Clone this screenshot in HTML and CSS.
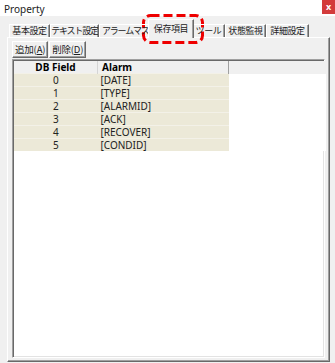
FILE: index.html
```html
<!DOCTYPE html>
<html>
<head>
	<meta charset="utf-8">
	<link rel="stylesheet" href="styles.css">
</head>
<body>
	<div class="window">
		<div class="titlebar">
			<span class="title">Property</span>
			<span class="close">x</span>
		</div>
		<div class="client">
			<div class="tabs">
				<div class="tab w1">基本設定</div>
				<div class="tab w2">テキスト設定</div>
				<div class="tab w3">アラームマスク</div>
				<div class="tab w4 active">保存項目</div>
				<div class="tab w5">ツール</div>
				<div class="tab w6">状態監視</div>
				<div class="tab w7">詳細設定</div>
			</div>
			<div class="panel">
				<div class="toolbar">
					<button class="btn">追加(<u>A</u>)</button>
					<button class="btn">削除(<u>D</u>)</button>
				</div>
				<div class="list">
					<table>
						<tr class="head">
							<th class="col1">DB Field</th>
							<th class="col2">Alarm</th>
							<th class="rest"></th>
						</tr>
						<tr class="row"><td class="num">0</td><td>[DATE]</td><td class="rest"></td></tr>
						<tr class="row"><td class="num">1</td><td>[TYPE]</td><td class="rest"></td></tr>
						<tr class="row"><td class="num">2</td><td>[ALARMID]</td><td class="rest"></td></tr>
						<tr class="row"><td class="num">3</td><td>[ACK]</td><td class="rest"></td></tr>
						<tr class="row"><td class="num">4</td><td>[RECOVER]</td><td class="rest"></td></tr>
						<tr class="row"><td class="num">5</td><td>[CONDID]</td><td class="rest"></td></tr>
					</table>
				</div>
			</div>
		</div>
		<svg class="mark" width="62" height="30" viewBox="0 0 62 30">
			<rect x="1.5" y="1.5" width="59" height="27" rx="7" ry="7" fill="none" stroke="#ee0000" stroke-width="3" stroke-dasharray="9 4"/>
		</svg>
	</div>
</body>
</html>
```

FILE: styles.css
```css
html, body {
	margin: 0;
	padding: 0;
}

body {
	font-family: "Noto Sans CJK JP", "Noto Sans", sans-serif;
	font-size: 10px;
	color: #000;
}

.window {
	position: relative;
	width: 335px;
	height: 363px;
	background: #f0f0f0;
	display: flex;
	flex-direction: column;
	overflow: hidden;
}

.titlebar {
	height: 16px;
	background: #fff;
	display: flex;
	align-items: flex-start;
	justify-content: space-between;
}

.title {
	font-family: "Noto Sans", sans-serif;
	font-size: 10px;
	padding: 2px 0 0 4px;
	color: #222;
}

.close {
	width: 13px;
	height: 14px;
	background: #d33b3b;
	color: #fff;
	font-family: "Noto Sans", sans-serif;
	font-size: 9px;
	font-weight: bold;
	text-align: center;
	line-height: 13px;
}

.client {
	flex: 1;
	display: flex;
	flex-direction: column;
	padding: 2px 5px 1px 7px;
	background: #f0f0f0;
}

.tabs {
	display: flex;
	align-items: flex-end;
	padding-left: 2px;
	height: 19px;
	position: relative;
	z-index: 1;
}

.tab {
	height: 13px;
	box-sizing: border-box;
	border-top: 1px solid #fff;
	border-left: 1px solid #fff;
	border-right: 1px solid #696969;
	box-shadow: inset -1px 0 0 #a0a0a0;
	text-align: center;
	font-size: 9px;
	letter-spacing: -0.4px;
	line-height: 12px;
	white-space: nowrap;
	overflow: hidden;
	color: #222;
}

.tab.active {
	height: 19px;
	margin: 0 -2px -1px -2px;
	padding-top: 3px;
	background: #f0f0f0;
	position: relative;
	z-index: 1;
}

.w1 { width: 41px; }
.w2 { width: 49px; letter-spacing: -1.2px; }
.w3 { width: 51px; text-align: left; padding-left: 2px; letter-spacing: -1.2px; overflow: visible; }
.w4 { width: 46px; }
.w5 { width: 33px; }
.w6 { width: 41px; }
.w7 { width: 43px; }

.panel {
	flex: 1;
	display: flex;
	flex-direction: column;
	border-top: 1px solid #fff;
	border-left: 1px solid #fff;
	border-right: 1px solid #696969;
	border-bottom: 1px solid #696969;
	box-shadow: inset -1px -1px 0 #a0a0a0;
	padding: 3px 4px 3px 4px;
}

.toolbar {
	display: flex;
	gap: 1px;
	height: 17px;
}

.btn {
	height: 17px;
	padding: 0 2px;
	margin: 0;
	font-family: "Noto Sans CJK JP", sans-serif;
	font-size: 9.5px;
	letter-spacing: -0.2px;
	line-height: 13px;
	background: #f0f0f0;
	border-top: 1px solid #fff;
	border-left: 1px solid #fff;
	border-right: 1px solid #696969;
	border-bottom: 1px solid #696969;
	box-shadow: inset -1px -1px 0 #a0a0a0;
	color: #222;
}

.list {
	flex: 1;
	margin-top: 1px;
	background: #fff;
	border-top: 1px solid #a0a0a0;
	border-left: 1px solid #a0a0a0;
	border-right: 1px solid #fff;
	border-bottom: 1px solid #fff;
	box-shadow: inset 1px 1px 0 #696969, inset -1px -1px 0 #e3e3e3;
	padding: 1px 0 0 1px;
}

table {
	border-collapse: collapse;
	width: 312px;
	font-family: "Noto Sans", sans-serif;
	font-size: 10px;
}

.head th {
	height: 12px;
	padding: 0;
	background: #f0f0f0;
	font-weight: bold;
	line-height: 11px;
	border-right: 1px solid #d5d5d5;
}

.head .col1 {
	width: 83px;
	text-align: center;
}

.head .col2 {
	width: 126px;
	text-align: left;
	padding-left: 4px;
	border-right: 1px solid #a0a0a0;
}

.head .rest {
	border-right: none;
}

.row td {
	height: 12px;
	padding: 0;
	background: #ece9d8;
	border-top: 1px solid #f3f1e8;
	line-height: 12px;
	color: #222;
}

.row .num {
	text-align: center;
}

.row td + td {
	padding-left: 3px;
}

.row .rest {
	background: #fff;
	border-top: none;
}

.mark {
	position: absolute;
	left: 142px;
	top: 14px;
}
```
